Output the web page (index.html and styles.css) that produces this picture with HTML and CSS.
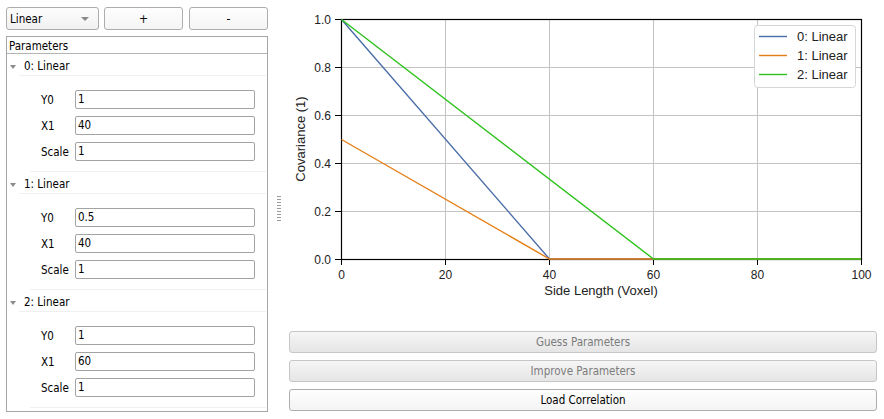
FILE: index.html
```html
<!DOCTYPE html>
<html>
<head>
<meta charset="utf-8">
<link rel="stylesheet" href="styles.css">
</head>
<body>
<div class="app">
  <div class="left">
    <div class="toolbar">
      <div class="combo"><span>Linear</span><i class="combo-arrow"></i></div>
      <button class="btn tool">+</button>
      <button class="btn tool">-</button>
    </div>
    <div class="params">
      <div class="params-head">Parameters</div>
      <div class="group first">
        <div class="group-head"><i class="tree-arrow"></i><span>0: Linear</span></div>
        <div class="group-body">
          <div class="row"><label>Y0</label><div class="field">1</div></div>
          <div class="row"><label>X1</label><div class="field">40</div></div>
          <div class="row"><label>Scale</label><div class="field">1</div></div>
        </div>
      </div>
      <div class="group">
        <div class="group-head"><i class="tree-arrow"></i><span>1: Linear</span></div>
        <div class="group-body">
          <div class="row"><label>Y0</label><div class="field">0.5</div></div>
          <div class="row"><label>X1</label><div class="field">40</div></div>
          <div class="row"><label>Scale</label><div class="field">1</div></div>
        </div>
      </div>
      <div class="group">
        <div class="group-head"><i class="tree-arrow"></i><span>2: Linear</span></div>
        <div class="group-body">
          <div class="row"><label>Y0</label><div class="field">1</div></div>
          <div class="row"><label>X1</label><div class="field">60</div></div>
          <div class="row"><label>Scale</label><div class="field">1</div></div>
        </div>
      </div>
    </div>
  </div>
  <div class="splitter"><div class="grip"></div></div>
  <div class="right">
    <svg class="chart" width="600" height="324" viewBox="0 0 600 324">
      <g transform="translate(-284 0)">
        <g class="grid">
          <line x1="445.5" y1="19" x2="445.5" y2="259"/>
          <line x1="549.5" y1="19" x2="549.5" y2="259"/>
          <line x1="653.5" y1="19" x2="653.5" y2="259"/>
          <line x1="757.5" y1="19" x2="757.5" y2="259"/>
          <line x1="341" y1="67.5" x2="861" y2="67.5"/>
          <line x1="341" y1="115.5" x2="861" y2="115.5"/>
          <line x1="341" y1="163.5" x2="861" y2="163.5"/>
          <line x1="341" y1="211.5" x2="861" y2="211.5"/>
        </g>
        <g class="ticks">
          <line x1="335" y1="19.5" x2="341" y2="19.5"/>
          <line x1="335" y1="67.5" x2="341" y2="67.5"/>
          <line x1="335" y1="115.5" x2="341" y2="115.5"/>
          <line x1="335" y1="163.5" x2="341" y2="163.5"/>
          <line x1="335" y1="211.5" x2="341" y2="211.5"/>
          <line x1="335" y1="259.5" x2="341" y2="259.5"/>
          <line x1="341.5" y1="259" x2="341.5" y2="265"/>
          <line x1="445.5" y1="259" x2="445.5" y2="265"/>
          <line x1="549.5" y1="259" x2="549.5" y2="265"/>
          <line x1="653.5" y1="259" x2="653.5" y2="265"/>
          <line x1="757.5" y1="259" x2="757.5" y2="265"/>
          <line x1="861.5" y1="259" x2="861.5" y2="265"/>
        </g>
        <rect class="frame" x="341.5" y="19.5" width="520" height="240"/>
        <polyline class="s0" points="341.5,19.5 549.5,259 861,259"/>
        <polyline class="s1" points="341.5,139.5 549.5,259 861,259"/>
        <polyline class="s2" points="341.5,19.5 653.5,259 861,259"/>
        <g class="ylab">
          <text x="331" y="23.5">1.0</text>
          <text x="331" y="71.5">0.8</text>
          <text x="331" y="119.5">0.6</text>
          <text x="331" y="167.5">0.4</text>
          <text x="331" y="215.5">0.2</text>
          <text x="331" y="263.5">0.0</text>
        </g>
        <g class="xlab">
          <text x="341.5" y="279">0</text>
          <text x="445.5" y="279">20</text>
          <text x="549.5" y="279">40</text>
          <text x="653.5" y="279">60</text>
          <text x="757.5" y="279">80</text>
          <text x="861.5" y="279">100</text>
        </g>
        <text class="title" x="601" y="295">Side Length (Voxel)</text>
        <text class="title" transform="translate(304.5 139) rotate(-90)">Covariance (1)</text>
        <rect class="legend" x="754.5" y="25.5" width="101" height="62" rx="3"/>
        <line class="s0" x1="759" y1="36.5" x2="787" y2="36.5"/>
        <line class="s1" x1="759" y1="55.5" x2="787" y2="55.5"/>
        <line class="s2" x1="759" y1="74.5" x2="787" y2="74.5"/>
        <g class="legtext">
          <text x="797" y="41">0: Linear</text>
          <text x="797" y="60">1: Linear</text>
          <text x="797" y="79">2: Linear</text>
        </g>
      </g>
    </svg>
    <div class="actions">
      <button class="btn wide disabled">Guess Parameters</button>
      <button class="btn wide disabled">Improve Parameters</button>
      <button class="btn wide">Load Correlation</button>
    </div>
  </div>
</div>
</body>
</html>
```

FILE: styles.css
```css
html, body {
  margin: 0;
  padding: 0;
  background: #ffffff;
}
body {
  width: 884px;
  height: 419px;
  overflow: hidden;
  font-family: "DejaVu Sans Condensed", "DejaVu Sans", sans-serif;
  font-size: 11.5px;
  color: #000;
}
.app {
  display: flex;
  width: 884px;
  height: 419px;
}
.left {
  width: 262px;
  padding: 7px 8px 0 6px;
  display: flex;
  flex-direction: column;
  gap: 6px;
}
.toolbar {
  display: flex;
  height: 23px;
}
.combo {
  width: 89px;
  height: 21px;
  border: 1px solid #acacac;
  border-radius: 3px;
  background: linear-gradient(#fdfdfd, #f1f1f1);
  display: flex;
  align-items: center;
  padding-left: 3px;
  box-sizing: content-box;
  margin-right: 5px;
}
.combo span {
  flex: 1;
}
.combo-arrow {
  width: 0;
  height: 0;
  border-left: 4px solid transparent;
  border-right: 4px solid transparent;
  border-top: 4px solid #8a8a8a;
  margin-right: 9px;
  margin-top: 1px;
}
.btn {
  font-family: inherit;
  font-size: 11.5px;
  color: #000;
  border: 1px solid #adadad;
  border-radius: 3px;
  background: linear-gradient(#fefefe, #f4f4f4);
  padding: 0;
  margin: 0;
  box-sizing: border-box;
}
.tool {
  width: 80px;
  height: 23px;
  font-size: 12px;
}
.tool + .tool {
  margin-left: 6px;
}
.params {
  width: 262px;
  height: 376px;
  border: 1px solid #a6a6a6;
  box-sizing: border-box;
  background: #fff;
}
.params-head {
  height: 17px;
  box-sizing: border-box;
  line-height: 14px;
  padding: 2px 0 0 2px;
  border-bottom: 1px solid #b4b4b4;
}
.group-head {
  height: 22px;
  box-sizing: border-box;
  padding-top: 3px;
  display: flex;
  align-items: center;
  border-bottom: 1px solid #f0f0f0;
  margin-left: 12px;
  margin-right: 1px;
  position: relative;
}
.group-head span {
  margin-left: 5px;
}
.tree-arrow {
  position: absolute;
  left: -9px;
  top: 11px;
  width: 0;
  height: 0;
  border-left: 3.5px solid transparent;
  border-right: 3.5px solid transparent;
  border-top: 4px solid #8c8c8c;
}
.group-body {
  padding: 14px 0 10px 0;
  display: flex;
  flex-direction: column;
  gap: 7px;
  border-bottom: 1px solid #f0f0f0;
  margin-left: 23px;
  margin-right: 1px;
}
.row {
  display: flex;
  align-items: center;
  height: 19px;
}
.row label {
  width: 34px;
  margin-left: 11px;
}
.field {
  width: 180px;
  height: 19px;
  box-sizing: border-box;
  border: 1px solid #a3a3a3;
  border-radius: 2px;
  padding-left: 2px;
  line-height: 17px;
  background: #fff;
}
.splitter {
  width: 8px;
  display: flex;
  align-items: center;
}
.grip {
  width: 4px;
  height: 25px;
  margin-left: 1px;
  margin-top: -2px;
  background: repeating-linear-gradient(#9a9a9a 0 1px, #ffffff 1px 3px);
}
.right {
  width: 600px;
  display: flex;
  flex-direction: column;
}
.chart {
  display: block;
}
.grid line {
  stroke: #c4c4c4;
  stroke-width: 1;
}
.ticks line {
  stroke: #000;
  stroke-width: 1;
}
.frame {
  fill: none;
  stroke: #000;
  stroke-width: 1.2;
}
.s0, .s1, .s2 {
  fill: none;
  stroke-width: 1.4;
}
.s0 { stroke: #4a6da8; }
.s1 { stroke: #e67e16; }
.s2 { stroke: #2dc21c; }
.chart text {
  font-family: "Liberation Sans", Arial, sans-serif;
  fill: #222;
}
.ylab text {
  font-size: 12px;
  text-anchor: end;
}
.xlab text {
  font-size: 12px;
  text-anchor: middle;
}
.chart .title {
  font-size: 13px;
  text-anchor: middle;
}
.legend {
  fill: #fff;
  stroke: #d6d6d6;
  stroke-width: 1;
}
.legtext text {
  font-size: 13px;
}
.actions {
  display: flex;
  flex-direction: column;
  gap: 7px;
  padding: 7px 7px 8px 5px;
}
.wide {
  height: 22px;
  width: 588px;
  font-size: 11.5px;
}
.disabled {
  color: #7c7c7c;
  border-color: #c6c6c6;
  background: linear-gradient(#f6f6f6, #e5e5e5);
}
```
